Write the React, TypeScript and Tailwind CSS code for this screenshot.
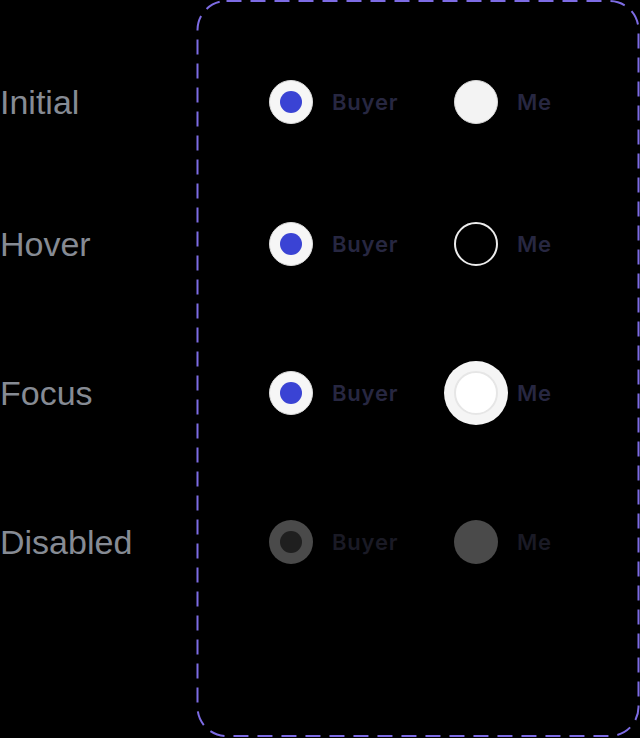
import React from 'react'

type RadioState = 'initial' | 'hover' | 'focus' | 'disabled'

const rows: { label: string; state: RadioState; gap: string }[] = [
  { label: "Initial", state: "initial", gap: "mt-[80px]" },
  { label: "Hover", state: "hover", gap: "mt-[98px]" },
  { label: "Focus", state: "focus", gap: "mt-[105px]" },
  { label: "Disabled", state: "disabled", gap: "mt-[105px]" },
]

const Radio = ({ checked, state }: { checked: boolean; state: RadioState }) => {
  if (state === "disabled") {
    return (
      <span className="flex h-[44px] w-[44px] items-center justify-center rounded-full bg-[#4a4a4a]">
        {checked && <span className="h-[22px] w-[22px] rounded-full bg-[#1f1f1f]" />}
      </span>
    )
  }
  if (checked) {
    return (
      <span className="flex h-[44px] w-[44px] items-center justify-center rounded-full border border-[#dcdcdc] bg-[#f6f6f6]">
        <span className="h-[22px] w-[22px] rounded-full bg-[#3a43d4]" />
      </span>
    )
  }
  if (state === "hover") {
    return <span className="block h-[44px] w-[44px] rounded-full border-2 border-[#ececec] bg-black" />
  }
  if (state === "focus") {
    return (
      <span className="block h-[44px] w-[44px] rounded-full border-2 border-[#e6e6e6] bg-white shadow-[0_0_0_10px_#f5f5f5]" />
    )
  }
  return <span className="block h-[44px] w-[44px] rounded-full border border-[#d8d8d8] bg-[#f3f3f3]" />
}

const Option = ({ text, checked, state, width }: { text: string; checked: boolean; state: RadioState; width: string }) => (
  <div className={`flex items-center gap-[19px] ${width}`}>
    <Radio checked={checked} state={state} />
    <span
      className={`text-[22px] font-semibold leading-none tracking-[0.8px] ${state === "disabled" ? "text-[#1a1a25]" : "text-[#272741]"}`}
      style={{ fontFamily: "Inter, 'Noto Sans', sans-serif" }}
    >
      {text}
    </span>
  </div>
)

export default function App() {
  return (
    <div className="relative h-[738px] w-[640px] overflow-hidden bg-black">
      {/* component set frame */}
      <svg className="pointer-events-none absolute left-[196px] top-0" width="444" height="738">
        <rect
          x="1.5"
          y="1"
          width="441"
          height="735"
          rx="29"
          fill="none"
          stroke="#7d6ce4"
          strokeWidth="2"
          strokeDasharray="15 9"
        />
      </svg>

      <div className="flex flex-col">
        {rows.map((row) => (
          <div key={row.label} className={`flex h-[44px] items-center ${row.gap}`}>
            <span
              className="w-[197px] text-[34px] leading-none text-[#868b94]"
              style={{ fontFamily: "'Liberation Sans', Arial, sans-serif" }}
            >
              {row.label}
            </span>
            <div className="flex items-center pl-[72px]">
              <Option text="Buyer" checked state={row.state} width="w-[185px]" />
              <Option text="Me" checked={false} state={row.state} width="w-auto" />
            </div>
          </div>
        ))}
      </div>
    </div>
  )
}
